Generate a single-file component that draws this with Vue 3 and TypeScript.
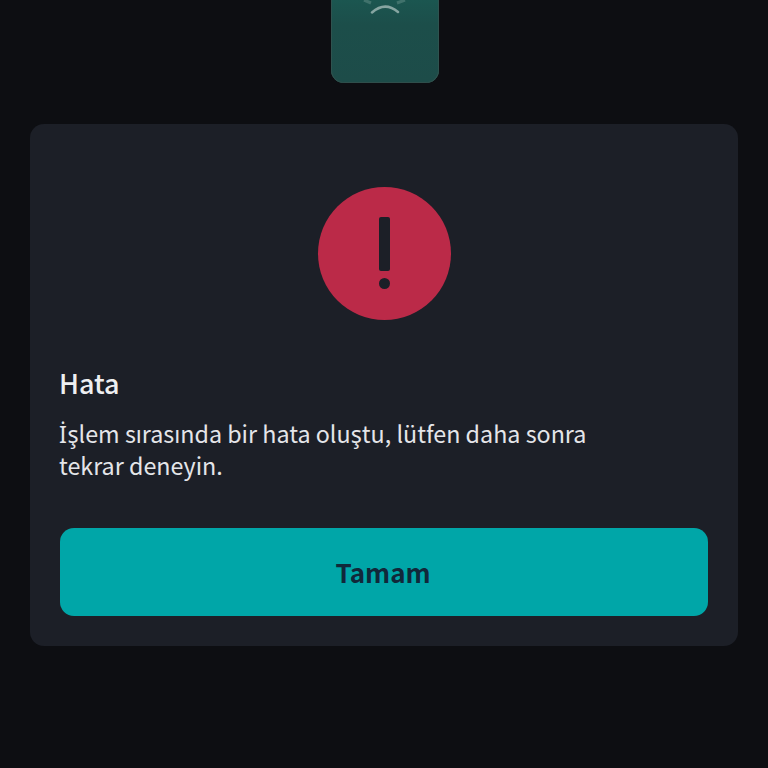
<script setup lang="ts">
const title = 'Hata'
const first = 'İ'
const lineOne = 'şlem sırasında bir hata oluştu, lütfen daha sonra'
const lineTwo = 'tekrar deneyin.'
const action = 'Tamam'
</script>

<template>
  <div class="screen" lang="tr">
    <div class="device">
      <svg class="waves" width="108" height="16" viewBox="0 0 108 16" fill="none">
        <path d="M33 0 L40 3 M74 0 L66 3" stroke="#5f8a84" stroke-width="3" opacity="0.55" />
        <path d="M41 12.500 Q54 1 67 12" stroke="#86a5a1" stroke-width="2.500" stroke-linecap="round" />
      </svg>
    </div>

    <section class="dialog">
      <svg class="alert" width="134" height="134" viewBox="0 0 134 134">
        <circle cx="67.500" cy="66.500" r="66.500" fill="#bb2a48" />
        <rect x="62" y="30" width="11" height="54" rx="2" fill="#1c1f27" />
        <circle cx="67.500" cy="96.500" r="5.500" fill="#1c1f27" />
      </svg>
      <h2 class="title">{{ title }}</h2>
      <div class="message">
        <p class="line"><span class="initial">{{ first }}</span><span>{{ lineOne }}</span></p>
        <p class="line">{{ lineTwo }}</p>
      </div>
      <button class="action" type="button">{{ action }}</button>
    </section>
  </div>
</template>

<style>
body {
  background: #0d0e12;
}
</style>

<style scoped>
.screen {
  width: 768px;
  height: 768px;
  overflow: hidden;
  background: #0d0e12;
  display: flex;
  flex-direction: column;
  align-items: center;
  font-family: "Noto Sans CJK SC", "Noto Sans", sans-serif;
}

.device {
  width: 108px;
  height: 83px;
  flex: none;
  margin-left: 2px;
  box-sizing: border-box;
  background: linear-gradient(#1b5650, #1c4e4a 30%, #1d4c49);
  box-shadow: inset 1px 0 0 #2f534f, inset -1px 0 0 #2f534f, inset 0 -1px 0 #2f4e4b;
  border-radius: 0 0 13px 13px;
}

.waves {
  display: block;
}

.dialog {
  width: 708px;
  height: 522px;
  margin-top: 41px;
  flex: none;
  box-sizing: border-box;
  padding: 63px 30px 30px;
  background: #1c1f27;
  border-radius: 14px;
  display: flex;
  flex-direction: column;
}

.alert {
  align-self: center;
  flex: none;
}

.title {
  margin: 43px 0 0 -1px;
  font-size: 27px;
  line-height: 38px;
  font-weight: 500;
  color: #eeeff1;
}

.message {
  margin: 15px 0 0 -1px;
  font-size: 23.300px;
  line-height: 32px;
  font-weight: 400;
  color: #e4e5e9;
}

.line {
  margin: 0;
  height: 32px;
}

.initial {
  margin-right: 0.500px;
  font-family: "Noto Sans", sans-serif;
}

.action {
  margin-top: auto;
  height: 88px;
  padding: 0 2px 2px 0;
  border: 0;
  border-radius: 14px;
  background: #00a6a8;
  color: #11283a;
  font-family: inherit;
  font-size: 26px;
  font-weight: 600;
}
</style>
